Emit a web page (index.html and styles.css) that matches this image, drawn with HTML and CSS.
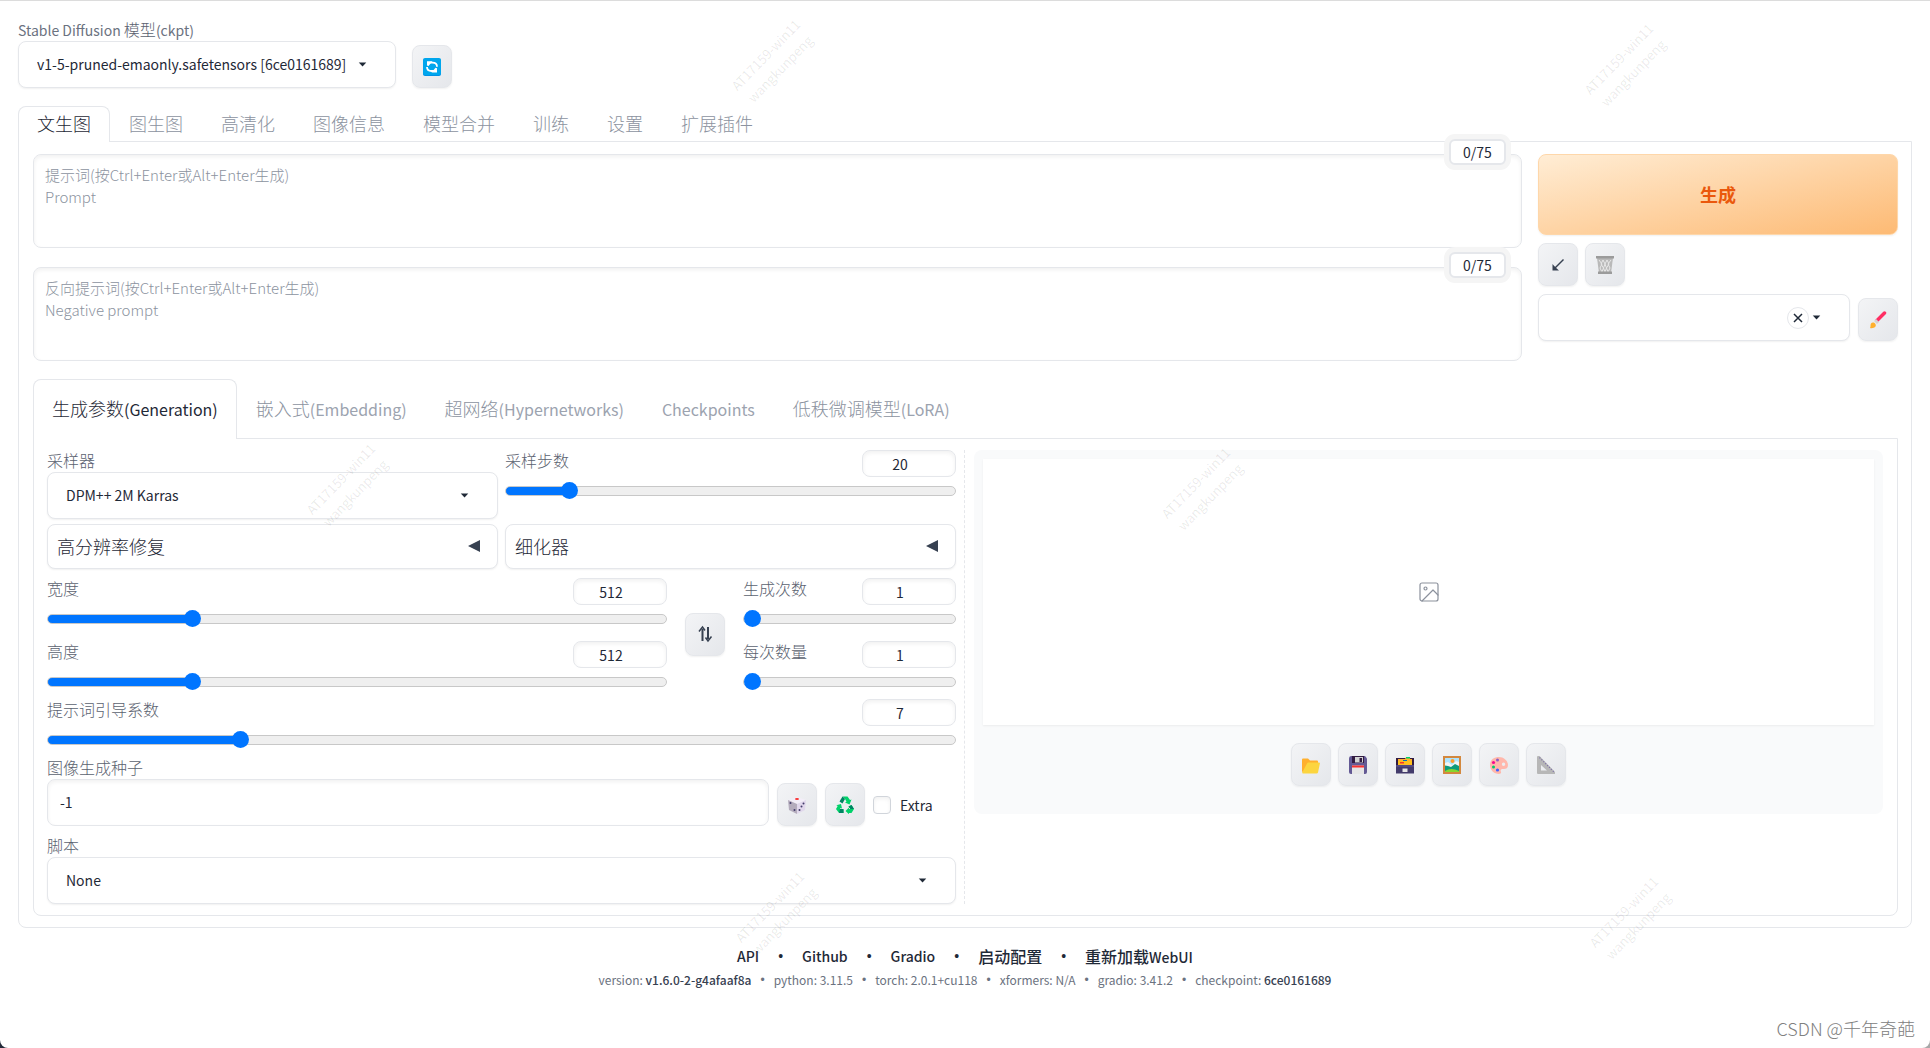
FILE: index.html
```html
<!DOCTYPE html>
<html lang="zh-CN">
<head>
<meta charset="utf-8">
<title>Stable Diffusion</title>
<link rel="stylesheet" href="styles.css">
</head>
<body>
<svg class="defs" aria-hidden="true">
  <symbol id="caret" viewBox="0 0 10 6"><path d="M0.5 0.5h9L5 5.5z" fill="#1f2937"/></symbol>
</svg>

<header class="quick">
  <div class="field model">
    <label for="ckpt"><span class="lat">Stable Diffusion </span>模型<span class="lat">(ckpt)</span></label>
    <div class="select"><select id="ckpt"><option>v1-5-pruned-emaonly.safetensors [6ce0161689]</option></select><svg class="caret"><use href="#caret"/></svg></div>
  </div>
  <button class="tool" aria-label="刷新">
    <svg viewBox="0 0 18 18"><rect y="1" width="18" height="17" rx="2" fill="#0091e6"/><rect width="18" height="17" rx="2" fill="#00a6ed"/><g fill="none" stroke="#fff" stroke-width="1.800"><path d="M7 4.700h2.500c3 0 4.500 1.800 4.500 4"/><path d="M11 13H8.500C5.500 13 4 11.200 4 9"/></g><path d="M4 3.200l5.500 0L5.500 8 4 7.500zM14 14.500H8.500L12.500 9.800l1.500.5z" fill="#fff"/></svg>
  </button>
</header>

<nav class="tabs">
  <button class="tab on">文生图</button><button class="tab">图生图</button><button class="tab">高清化</button><button class="tab">图像信息</button><button class="tab">模型合并</button><button class="tab">训练</button><button class="tab">设置</button><button class="tab">扩展插件</button>
</nav>

<main class="panel outer">
  <section class="top">
    <div class="prompts">
      <div class="prompt"><textarea aria-label="提示词" placeholder="提示词(按Ctrl+Enter或Alt+Enter生成)&#10;Prompt"></textarea><span class="count">0/75</span></div>
      <div class="prompt"><textarea aria-label="反向提示词" placeholder="反向提示词(按Ctrl+Enter或Alt+Enter生成)&#10;Negative prompt"></textarea><span class="count">0/75</span></div>
    </div>
    <div class="actions">
      <button class="generate">生成</button>
      <div class="tools">
        <button class="tool" aria-label="读取参数"><svg viewBox="0 0 18 18"><path d="M14.500 3.500L5.500 12.500" stroke="#374151" stroke-width="1.500"/><path d="M3.500 8V14.500H10L8 12.800 5.200 10z" fill="#374151"/></svg></button>
        <button class="tool" aria-label="清空"><svg viewBox="0 0 18 18"><path d="M1 2h16l-2 15H3z" fill="#b9b9b9"/><path d="M3 4l3 4-2 4 2 4M7 4L5 8l2.500 4L6 16M7 4l2 4-1.500 4L9 16M11 4L9 8l1.500 4L9 16M11 4l2 4-2.500 4 1.500 4M15 4l-3 4 2 4-2 4" fill="none" stroke="#e8e8e8" stroke-width="1"/><path d="M0 0h18v2.500H0zM2 15.500h14V18H2z" fill="#9b9b9b"/></svg></button>
      </div>
      <div class="styles">
        <div class="select"><select aria-label="预设样式"><option></option></select><button class="clear" aria-label="清除"><svg viewBox="0 0 10 10"><path d="M1 1l8 8M9 1L1 9" stroke="#1f2937" stroke-width="1.500"/></svg></button><svg class="caret"><use href="#caret"/></svg></div>
        <button class="tool" aria-label="编辑样式"><svg viewBox="0 0 18 18"><path d="M8 9.500L15.500 2" stroke="#ff2e63" stroke-width="3.500" stroke-linecap="round"/><path d="M5 10l2-2 3 3-2 2z" fill="#d3d3d3"/><path d="M1 17c1-1 0-3 1-4.500 2-2.500 6 .5 4.500 3C5.500 17 3 17.500 1 17z" fill="#ffb02e"/></svg></button>
      </div>
    </div>
  </section>

  <nav class="tabs sub">
    <button class="tab on">生成参数<span class="lat">(Generation)</span></button><button class="tab">嵌入式<span class="lat">(Embedding)</span></button><button class="tab">超网络<span class="lat">(Hypernetworks)</span></button><button class="tab"><span class="lat">Checkpoints</span></button><button class="tab">低秩微调模型<span class="lat">(LoRA)</span></button>
  </nav>

  <section class="panel inner">
    <div class="settings">
      <div class="pair">
        <div class="field">
          <label for="sampler">采样器</label>
          <div class="select"><select id="sampler"><option>DPM++ 2M Karras</option></select><svg class="caret"><use href="#caret"/></svg></div>
        </div>
        <div class="slider"><label for="steps">采样步数</label><input class="num" type="text" aria-label="采样步数" value="20"><input id="steps" type="range" min="1" max="150" value="20" style="--fill:13%"></div>
      </div>
      <div class="pair">
        <button class="accordion"><span>高分辨率修复</span><svg viewBox="0 0 12 12"><path d="M0 6L12 0V12z"/></svg></button>
        <button class="accordion"><span>细化器</span><svg viewBox="0 0 12 12"><path d="M0 6L12 0V12z"/></svg></button>
      </div>
      <div class="dims">
        <div class="stack">
          <div class="slider"><label for="w">宽度</label><input class="num" type="text" aria-label="宽度" value="512"><input id="w" type="range" min="64" max="2048" value="512" style="--fill:23%"></div>
          <div class="slider"><label for="h">高度</label><input class="num" type="text" aria-label="高度" value="512"><input id="h" type="range" min="64" max="2048" value="512" style="--fill:23%"></div>
        </div>
        <button class="tool" aria-label="交换宽高"><svg viewBox="0 0 18 18"><path d="M6.500 16V4M12 2v12" stroke="#374151" stroke-width="2" fill="none"/><path d="M3 6.500L6.500 2 9 5.500M15.500 11.500L12 16 9.500 12.500" stroke="#374151" stroke-width="1.500" fill="none"/></svg></button>
        <div class="stack">
          <div class="slider"><label for="bc">生成次数</label><input class="num" type="text" aria-label="生成次数" value="1"><input id="bc" type="range" min="1" max="100" value="1" style="--fill:0%"></div>
          <div class="slider"><label for="bs">每次数量</label><input class="num" type="text" aria-label="每次数量" value="1"><input id="bs" type="range" min="1" max="8" value="1" style="--fill:0%"></div>
        </div>
      </div>
      <div class="slider"><label for="cfg">提示词引导系数</label><input class="num" type="text" aria-label="提示词引导系数" value="7"><input id="cfg" type="range" min="1" max="30" step="0.5" value="7" style="--fill:21%"></div>
      <div class="seed">
        <div class="field">
          <label for="seed">图像生成种子</label>
          <input id="seed" class="text" type="text" value="-1">
        </div>
        <button class="tool" aria-label="随机种子"><svg viewBox="0 0 18 18"><path d="M0 4l9-3 9 3-9 4z" fill="#f3eef8"/><path d="M0 4l9 4v10l-8-4z" fill="#b4acbc"/><path d="M18 4L9 8v10l8-4z" fill="#e1d8ec"/><ellipse cx="9" cy="3" rx="2" ry="1" fill="#f8312f"/><g fill="#433b6b"><circle cx="2.500" cy="7" r="1"/><circle cx="6.500" cy="14" r="1"/><circle cx="15.500" cy="7.500" r="1"/><circle cx="13.500" cy="10.500" r="1"/><circle cx="11.500" cy="14" r="1"/></g></svg></button>
        <button class="tool" aria-label="复用种子"><svg viewBox="0 0 18 18"><g fill="#00d26a"><path d="M6.500.5h5L14 4l1.500-.5-2 5-4.500-2 1.500-.7L9 3z"/><path d="M15.500 9L18 13l-2.500 4H13v1.200L9.500 15l3.500-3.500V13h1.500L12.500 10.500z"/><path d="M7.500 17H3L0 13l1.700-3L.3 9.200 5 8l1 4.500-1.400-.6L4 13l3.500.5z"/></g><g fill="#008463"><path d="M6.500.5L9 3 6.500 7.500 3.500 5.500z"/><path d="M15.500 9L18 13l-3.500 0-2-2.500zM3 17l1-4h3.500v4z"/></g></svg></button>
        <label class="check"><input type="checkbox"><span>Extra</span></label>
      </div>
      <div class="field">
        <label for="script">脚本</label>
        <div class="select"><select id="script"><option>None</option></select><svg class="caret"><use href="#caret"/></svg></div>
      </div>
    </div>

    <div class="results">
      <div class="gallery">
        <div class="canvas"><svg viewBox="0 0 24 24" fill="none" stroke="#8b919c" stroke-width="1.200" stroke-linecap="round" stroke-linejoin="round"><rect x="3" y="3" width="18" height="18" rx="2"/><circle cx="8.500" cy="8.500" r="1.500"/><path d="M21 15l-5-5L5 21"/></svg></div>
        <div class="tools">
          <button class="tool" aria-label="打开目录"><svg viewBox="0 0 18 18"><path d="M0 3.500Q0 2.500 1 2.500h5l2 2h7q1 0 1 1V16H1Q0 16 0 15z" fill="#ffb02e"/><path d="M5 7.500Q5.300 6.500 6.500 6.500H17q1.200 0 .9 1L16 16.500q-.3 1-1.500 1H1q-1 0-.8-1z" fill="#fcd53f"/></svg></button>
          <button class="tool" aria-label="保存"><svg viewBox="0 0 18 18"><path d="M0 2.500Q0 0 2 0h14l2 2.500V16q0 2-2 2H2q-2 0-2-2z" fill="#635994"/><path d="M3 0h12v7H3z" fill="#321b41"/><path d="M6 1h8v5.500H6z" fill="#d3d3d3"/><path d="M10.500 2H13v4h-2.500z" fill="#321b41"/><path d="M3 9.500h12V18H3z" fill="#e6e6e6"/><path d="M3 9.500h12v2H3z" fill="#f8312f"/></svg></button>
          <button class="tool" aria-label="打包保存"><svg viewBox="0 0 18 18"><path d="M0 2h18v15.500H0z" fill="#433b6b"/><path d="M0 2h18v7H0z" fill="#321b41"/><path d="M2 3h7l1-2h4v2h2v6H2z" fill="#ffb02e"/><path d="M2 5h14v3.500H2z" fill="#fcc21b"/><path d="M10 1h4v1.500h-4z" fill="#00d26a"/><path d="M7 4h4v1H7z" fill="#0074ba"/><path d="M4 6h4v1.500H4z" fill="#f8312f"/><path d="M0 9.500h18v1H0z" fill="#635994"/><path d="M6.500 12.500h5V16h-5z" fill="#e6e6e6"/></svg></button>
          <button class="tool" aria-label="图生图"><svg viewBox="0 0 18 18"><path d="M0 0h18v18H0z" fill="#d3883e"/><path d="M2 2h14v14H2z" fill="#aee4ff"/><path d="M2 7l3-1 4 3 4-4 3 1v6H2z" fill="#f4f4f4"/><circle cx="9.500" cy="5" r="2" fill="#ff9e2c"/><path d="M2 9.500l3 .5 3 1 4-3 4 2v6H2z" fill="#0d9b7c"/><path d="M2 15q6-4 14 0v1H2z" fill="#86d72f"/></svg></button>
          <button class="tool" aria-label="局部重绘"><svg viewBox="0 0 18 18"><path d="M9 1C14 1 18 5 18 9c0 3-2 4-4 4-3-.5-4 1-3 3 .5 1.500-1 2-2 2-5 0-9-4-9-9s4-8 9-8zM13.500 6.500a1.700 1.700 0 1 0 .1 3.400 1.700 1.700 0 0 0-.1-3.400z" fill="#ffb7ab" fill-rule="evenodd"/><circle cx="7.500" cy="4" r="1.500" fill="#8a5cc4"/><circle cx="3.500" cy="6.500" r="1.600" fill="#f70a8d"/><circle cx="3.500" cy="11" r="1.500" fill="#00c96a"/><circle cx="7.500" cy="14" r="1.600" fill="#3f5fff"/></svg></button>
          <button class="tool" aria-label="高清化"><svg viewBox="0 0 18 18"><path d="M1 0h1.500L18 16v2H1q-1 0-1-1V1q0-1 1-1zM4 9v5.500h6z" fill="#b7b7b7" fill-rule="evenodd"/><path d="M2.500 1.500L17 16" stroke="#8074a8" stroke-width="1.200" stroke-dasharray="1.200 1.500"/></svg></button>
        </div>
      </div>
    </div>
  </section>
</main>

<footer>
  <div class="links"><a href="#">API</a><i>•</i><a href="#">Github</a><i>•</i><a href="#">Gradio</a><i>•</i><a href="#"><span class="zh">启动配置</span></a><i>•</i><a href="#"><span class="zh">重新加载</span>WebUI</a></div>
  <div class="versions"><span>version: <a href="#">v1.6.0-2-g4afaaf8a</a></span><i>•</i><span>python: 3.11.5</span><i>•</i><span>torch: 2.0.1+cu118</span><i>•</i><span>xformers: N/A</span><i>•</i><span>gradio: 3.41.2</span><i>•</i><span>checkpoint: <a href="#">6ce0161689</a></span></div>
</footer>

<div class="marks" aria-hidden="true">
  <p class="mark m1">AT17159-win11<br>wangkunpeng</p>
  <p class="mark m2">AT17159-win11<br>wangkunpeng</p>
  <p class="mark m3">AT17159-win11<br>wangkunpeng</p>
  <p class="mark m4">AT17159-win11<br>wangkunpeng</p>
  <p class="mark m5">AT17159-win11<br>wangkunpeng</p>
  <p class="mark m6">AT17159-win11<br>wangkunpeng</p>
</div>
<p class="credit">CSDN @千年奇葩</p>
</body>
</html>
```
FILE: styles.css
```css
*, *::before, *::after { box-sizing: border-box; }

:root {
  --line: #e5e7eb;
  --muted: #6b7280;
  --faint: #9ca3af;
  --ink: #1f2937;
  --soft: 0 1px 2px rgba(0, 0, 0, .06);
  --inset: inset 0 2px 4px rgba(0, 0, 0, .06);
}

html { background: linear-gradient(to right, #232a3a, #a8a8a8); }

body {
  margin: 0;
  min-height: 100vh;
  padding: 18px 18px 0;
  border-top: 1px solid #dcdcdc;
  border-radius: 0 0 8px 8px;
  background: #fff;
  color: var(--ink);
  font: 14px/20px "Noto Sans CJK SC", sans-serif;
  position: relative;
}

button, input, select, textarea { font: inherit; color: inherit; margin: 0; }
button { padding: 0; border: 0; background: none; }
a { color: inherit; text-decoration: none; }
i { font-style: normal; font-family: "Liberation Sans", sans-serif; }
.defs { display: none; }

/* Latin runs sit one step smaller than the Chinese around them */
.lat { font-weight: 400; line-height: 1; }

/* fields */
label { color: #5b6270; font-size: 16px; line-height: 20px; font-weight: 300; }
label .lat { color: var(--muted); font-size: 14px; }
.field { display: grid; grid-template-rows: 20px auto; gap: 2px; }

.select { display: grid; align-items: center; }
.select > * { grid-row: 1; grid-column: 1; }
.select select {
  appearance: none;
  width: 100%;
  height: 47px;
  padding: 0 18px 2px;
  border: 1px solid var(--line);
  border-radius: 8px;
  background: #fff;
  box-shadow: var(--soft);
}
.caret { justify-self: end; width: 9px; height: 5px; margin-right: 29px; pointer-events: none; }

.text {
  width: 100%;
  height: 47px;
  padding: 0 12px 2px;
  border: 1px solid var(--line);
  border-radius: 8px;
  background: #fff;
  box-shadow: var(--inset);
}

.tool {
  display: grid;
  place-items: center;
  flex: none;
  width: 40px;
  height: 43px;
  border: 1px solid var(--line);
  border-radius: 8px;
  background: linear-gradient(to bottom right, #f3f4f6, #e5e7eb);
  box-shadow: var(--soft);
}
.tool svg { width: 18px; height: 18px; }
.tools { display: flex; gap: 7px; }

/* checkpoint row */
.quick { display: flex; align-items: flex-end; gap: 16px; }
.model { width: 378px; }

/* tabs */
.tabs { display: flex; margin: 18px 0 -1px; position: relative; }
.tab {
  height: 36px;
  padding: 0 18px 4px;
  border: 1px solid transparent;
  border-bottom: 0;
  border-radius: 8px 8px 0 0;
  color: #8c93a0;
  font-size: 18px;
  font-weight: 300;
  white-space: nowrap;
}
.tab .lat { color: var(--faint); font-size: 16px; }
.tab.on { border-color: var(--line); background: #fff; color: var(--ink); }
.tab.on .lat { color: var(--ink); }
.tabs.sub { margin-top: 18px; }
.sub .tab { height: 60px; }

.panel { border: 1px solid var(--line); border-radius: 0 0 8px 8px; }
.outer { padding: 12px 13px 11px 14px; }

/* prompts */
.top { display: grid; grid-template-columns: minmax(0, 1488fr) minmax(0, 360fr); gap: 16px; }
.prompts { display: grid; gap: 19px; align-content: start; }
.prompt { position: relative; display: grid; }
.prompt textarea {
  width: 100%;
  height: 94px;
  padding: 9px 11px;
  border: 1px solid var(--line);
  border-radius: 8px;
  box-shadow: var(--inset);
  font-size: 15px;
  line-height: 22px;
  resize: none;
}
textarea::placeholder { color: #8c93a0; font-weight: 300; }
.count {
  position: absolute;
  top: -15px;
  right: 16px;
  padding: 1px 12px;
  border: 2px solid var(--line);
  border-radius: 6px;
  background: #fff;
  box-shadow: 0 0 0 5px #f5f5f5;
}

.actions { display: grid; gap: 8px; align-content: start; }
.generate {
  height: 81px;
  padding-bottom: 2px;
  border: 1px solid #fed7aa;
  border-radius: 8px;
  background: linear-gradient(to bottom right, #ffedd5, #fdba74);
  box-shadow: var(--soft);
  color: #ea580c;
  font-size: 18px;
  font-weight: 700;
}
.styles { display: flex; align-items: flex-end; gap: 8px; }
.styles .select { flex: 1; }
.clear {
  display: grid;
  place-items: center;
  justify-self: end;
  width: 22px;
  height: 22px;
  margin-right: 41px;
  border: 1px solid var(--line);
  border-radius: 50%;
}
.clear svg { width: 10px; height: 10px; }

/* generation settings */
.inner { display: grid; grid-template-columns: minmax(0, 1fr) minmax(0, 1fr); padding: 11px 14px 11px 13px; }
.settings { display: grid; gap: 5px; align-content: start; padding-right: 8px; border-right: 1px dashed var(--line); }
.pair { display: grid; grid-template-columns: 1fr 1fr; gap: 7px; }
.slider { display: grid; grid-template-columns: 1fr 94px; row-gap: 5px; align-content: start; }
.num {
  width: 94px;
  height: 27px;
  padding: 0 26px 0 8px;
  border: 1px solid var(--line);
  border-radius: 8px;
  box-shadow: var(--inset);
  text-align: center;
}
input[type=range] {
  appearance: none;
  grid-column: 1 / -1;
  width: 100%;
  height: 17px;
  background: none;
}
input[type=range]::-webkit-slider-runnable-track {
  height: 10px;
  border: 1px solid #c8c8c8;
  border-radius: 5px;
  background: linear-gradient(to right, #0075ff var(--fill), #efefef var(--fill)) border-box;
}
input[type=range]::-webkit-slider-thumb {
  appearance: none;
  width: 17px;
  height: 17px;
  margin-top: -5px;
  border-radius: 50%;
  background: #0075ff;
}

.accordion {
  display: flex;
  align-items: center;
  justify-content: space-between;
  height: 45px;
  padding: 0 17px 2px 9px;
  border: 1px solid var(--line);
  border-radius: 8px;
  background: #fff;
  box-shadow: var(--soft);
  color: var(--ink);
  font-size: 18px;
  font-weight: 300;
}
.accordion svg { width: 12px; height: 12px; fill: #374151; }

.dims { display: grid; grid-template-columns: minmax(0, 1fr) 40px 213px; gap: 18px; align-items: center; padding: 4px 0; }
.stack { display: grid; gap: 14px; }

.seed { display: flex; align-items: flex-end; gap: 8px; padding: 4px 0; }
.seed .field { flex: 1; }
.check { display: flex; align-items: center; gap: 9px; width: 83px; height: 43px; color: var(--ink); font-size: 14px; font-weight: 400; }
.check input { appearance: none; width: 18px; height: 18px; border: 1px solid #d1d5db; border-radius: 4px; box-shadow: var(--inset); }

/* gallery */
.results { padding-left: 9px; }
.gallery { padding: 9px 9px 28px; border-radius: 8px; background: #f9fafb; }
.canvas { display: grid; place-items: center; height: 266px; background: #fff; box-shadow: var(--soft); }
.canvas svg { width: 24px; height: 24px; }
.gallery .tools { justify-content: center; padding-top: 18px; }

/* footer */
footer { padding-top: 16px; text-align: center; }
.links, .versions { display: flex; justify-content: center; align-items: center; height: 24px; }
.links { gap: 19px; font-weight: 500; }
.links .zh { font-size: 16px; }
.versions { gap: 9px; color: var(--muted); font-size: 12px; }
.versions a { color: #374151; font-weight: 500; }

/* watermark overlay */
.marks { position: absolute; inset: 0; overflow: hidden; pointer-events: none; }
.mark {
  position: absolute;
  margin: 0;
  color: rgba(0, 0, 0, .09);
  font-size: 13px;
  line-height: 20px;
  text-align: center;
  transform: translate(-50%, -50%) rotate(-46deg);
}
.m1 { left: 773px; top: 61px; }
.m2 { left: 1626px; top: 65px; }
.m3 { left: 348px; top: 485px; }
.m4 { left: 1203px; top: 489px; }
.m5 { left: 777px; top: 913px; }
.m6 { left: 1631px; top: 918px; }

.credit {
  position: absolute;
  right: 15px;
  bottom: 8px;
  margin: 0;
  color: #808080;
  font-size: 18px;
  line-height: 24px;
  font-weight: 300;
}
```
